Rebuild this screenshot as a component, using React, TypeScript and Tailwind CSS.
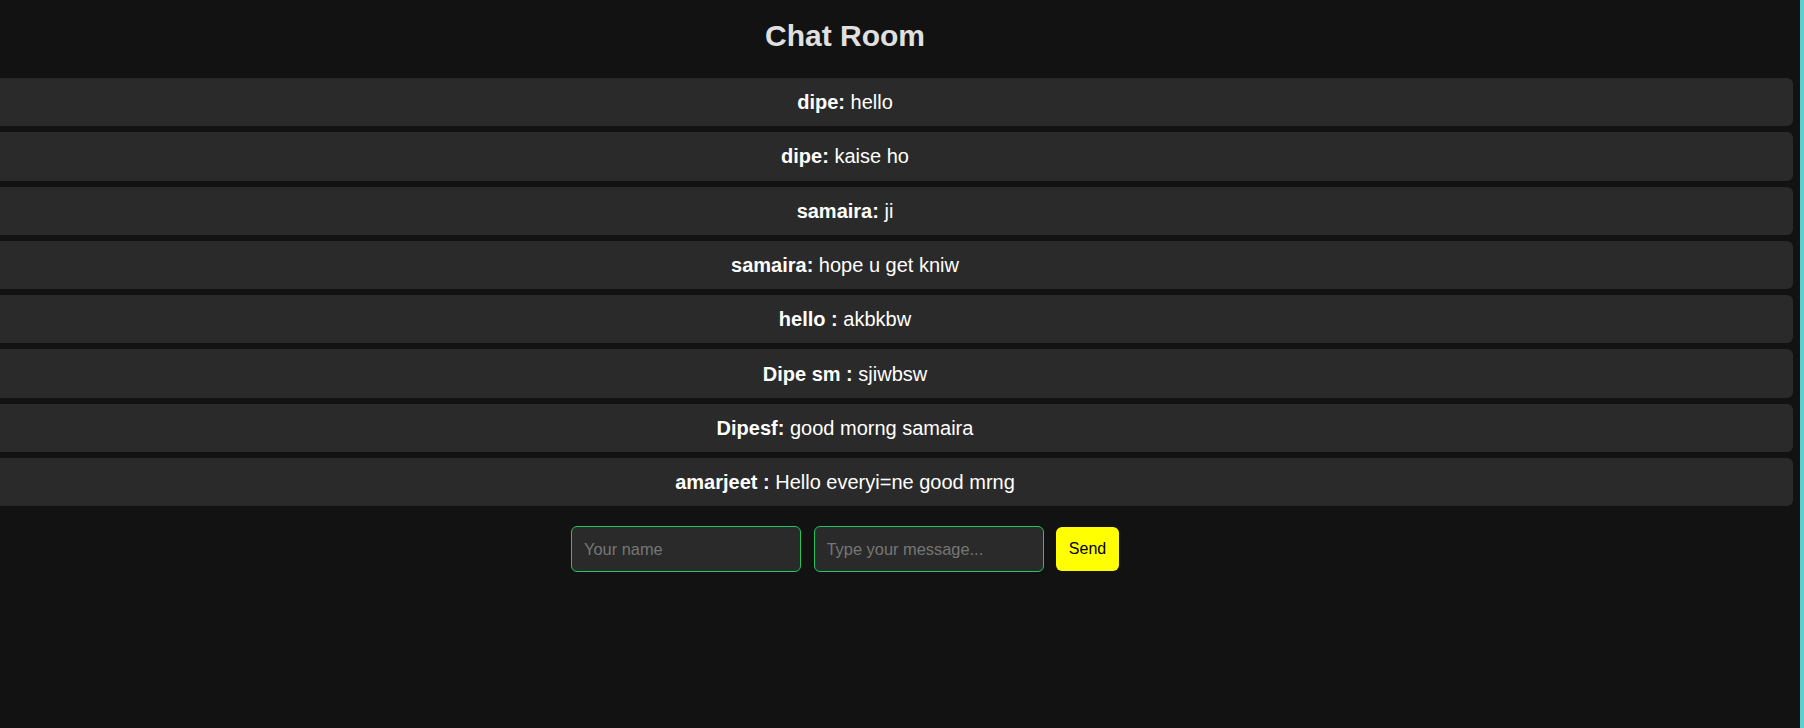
import { useState } from 'react';

const messages = [
  { name: 'dipe:', text: 'hello' },
  { name: 'dipe:', text: 'kaise ho' },
  { name: 'samaira:', text: 'ji' },
  { name: 'samaira:', text: 'hope u get kniw' },
  { name: 'hello :', text: 'akbkbw' },
  { name: 'Dipe sm :', text: 'sjiwbsw' },
  { name: 'Dipesf:', text: 'good morng samaira' },
  { name: 'amarjeet :', text: 'Hello everyi=ne good mrng' },
];

const App = () => {
  const [name, setName] = useState('');
  const [message, setMessage] = useState('');

  return (
    <div className="flex h-[728px] w-full overflow-hidden bg-[#121212] font-['Liberation_Sans',Arial,sans-serif]">
      {/* Chat column (scrolled slightly to the right) */}
      <div className="ml-[-103px] w-[1896px] shrink-0 pt-[19px]">
        <h1 className="mb-[24.5px] text-center text-[30px] font-bold leading-[34.5px] text-[#e0e0e0]">
          Chat Room
        </h1>

        <div className="flex flex-col gap-[6px]">
          {messages.map((m, i) => (
            <div
              key={i}
              className="flex h-[48.3px] items-center justify-center rounded-[6px] bg-[#2a2a2a] text-[20px] text-white"
            >
              <strong className="font-bold">{m.name}</strong>
              <span className="whitespace-pre"> {m.text}</span>
            </div>
          ))}
        </div>

        {/* Input form */}
        <div className="mt-[20px] flex items-center justify-center gap-[12.5px]">
          <input
            value={name}
            onChange={e => setName(e.target.value)}
            placeholder="Your name"
            className="h-[46px] w-[230px] rounded-[6px] border border-[#22c55e] bg-[#2a2a2a] px-[12px] text-[16.4px] text-white placeholder:text-[#767676] outline-none"
          />
          <input
            value={message}
            onChange={e => setMessage(e.target.value)}
            placeholder="Type your message..."
            className="h-[46px] w-[230px] rounded-[6px] border border-[#22c55e] bg-[#2a2a2a] px-[12px] text-[16.4px] text-white placeholder:text-[#767676] outline-none"
          />
          <button
            type="button"
            className="h-[44px] w-[63px] rounded-[6px] bg-[#ffff00] text-[16px] text-black"
          >
            Send
          </button>
        </div>
      </div>

      <div className="w-[7px] shrink-0" />
      <div className="w-[4px] shrink-0 bg-[#5ccfd1]" />
    </div>
  );
};

export default App;
